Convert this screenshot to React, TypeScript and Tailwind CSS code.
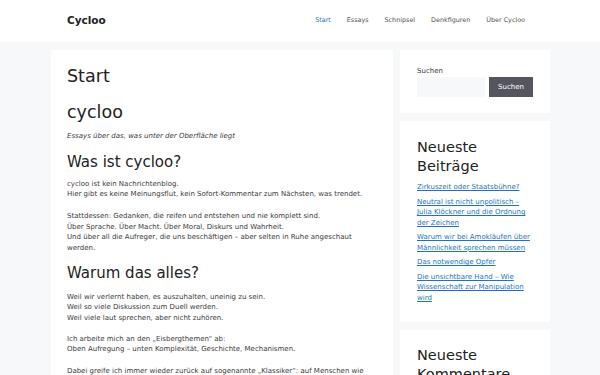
const NAV = ['Start', 'Essays', 'Schnipsel', 'Denkfiguren', 'Über Cycloo']

const POSTS = [
  'Zirkuszeit oder Staatsbühne?',
  'Neutral ist nicht unpolitisch – Julia Klöckner und die Ordnung der Zeichen',
  'Warum wir bei Amokläufen über Männlichkeit sprechen müssen',
  'Das notwendige Opfer',
  'Die unsichtbare Hand – Wie Wissenschaft zur Manipulation wird',
]

export default function App() {
  return (
    <div className="min-h-[375px] bg-[#f7f8f9] text-[#222] font-['DejaVu_Sans',sans-serif]">
      <header className="bg-white">
        <div className="mx-auto flex h-[42px] w-[500px] items-center justify-between pl-[17px] pr-[17px]">
          <span className="text-[10.5px] font-bold text-[#222]">Cycloo</span>
          <nav className="flex">
            {NAV.map((n, i) => (
              <a key={n} className={`px-[8px] text-[6.4px] ${i === 0 ? 'text-[#1e73be]' : 'text-[#515151]'}`}>
                {n}
              </a>
            ))}
          </nav>
        </div>
      </header>

      <div className="mx-auto mt-[8px] flex w-[500px] items-start gap-[7px] pl-px">
        <main className="w-[342px] bg-white px-[16px] pt-[13px] pb-6 text-[7px] leading-[10.7px] text-[#3a3a3a]">
          <h1 className="text-[17.5px] leading-[26px] text-[#222]">Start</h1>
          <h2 className="mt-[10px] text-[17.5px] leading-[26px] text-[#222]">cycloo</h2>
          <p className="mt-[6px] italic">Essays über das, was unter der Oberfläche liegt</p>
          <h2 className="mt-[10px] text-[15px] leading-[20px] text-[#222]">Was ist cycloo?</h2>
          <p className="mt-[7px]">
            cycloo ist kein Nachrichtenblog.<br />
            Hier gibt es keine Meinungsflut, kein Sofort-Kommentar zum Nächsten, was trendet.
          </p>
          <p className="mt-[10.7px]">
            Stattdessen: Gedanken, die reifen und entstehen und nie komplett sind.<br />
            Über Sprache. Über Macht. Über Moral, Diskurs und Wahrheit.<br />
            Und über all die Aufreger, die uns beschäftigen – aber selten in Ruhe angeschaut werden.
          </p>
          <h2 className="mt-[9px] text-[15px] leading-[20px] text-[#222]">Warum das alles?</h2>
          <p className="mt-[9px]">
            Weil wir verlernt haben, es auszuhalten, uneinig zu sein.<br />
            Weil so viele Diskussion zum Duell werden.<br />
            Weil viele laut sprechen, aber nicht zuhören.
          </p>
          <p className="mt-[10px]">
            Ich arbeite mich an den „Eisbergthemen“ ab:<br />
            Oben Aufregung – unten Komplexität, Geschichte, Mechanismen.
          </p>
          <p className="mt-[10.7px]">
            Dabei greife ich immer wieder zurück auf sogenannte „Klassiker“: auf Menschen wie
          </p>
        </main>

        <aside className="flex w-[150px] flex-col gap-[8px]">
          <section className="bg-white px-[17px] pt-[16px] pb-[16px]">
            <label className="block text-[7px] leading-[10px] text-[#3a3a3a]">Suchen</label>
            <div className="mt-[1px] flex gap-[4px]">
              <div className="h-[20px] flex-1 bg-[#f7f8f9]" />
              <button className="h-[20px] w-[44px] bg-[#55555e] text-[7px] text-white">Suchen</button>
            </div>
          </section>

          <section className="bg-white px-[17px] pt-[17px] pb-[19px]">
            <h2 className="text-[14.5px] leading-[18.5px] text-[#222]">Neueste Beiträge</h2>
            <ul className="mt-[7px] flex flex-col gap-[4px] text-[7px] leading-[10.5px]">
              {POSTS.map(p => (
                <li key={p}>
                  <a className="text-[#1e73be] underline">{p}</a>
                </li>
              ))}
            </ul>
          </section>

          <section className="bg-white px-[17px] pt-[16px] pb-[20px]">
            <h2 className="text-[14.5px] leading-[18.5px] text-[#222]">Neueste Kommentare</h2>
          </section>
        </aside>
      </div>
    </div>
  )
}
